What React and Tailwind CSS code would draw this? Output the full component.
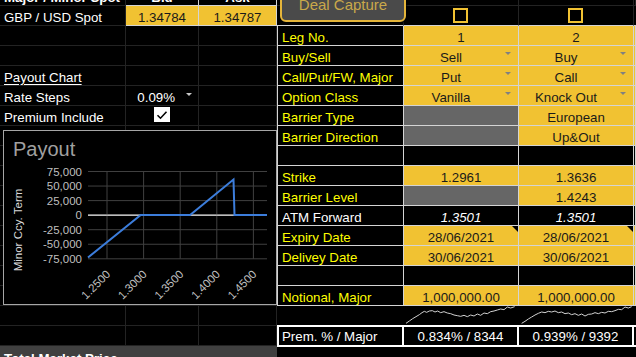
const Y = 'bg-[#f1c232] text-[#1a1a1a]';
const G = 'bg-[#666666]';
const B = 'bg-black text-white';

const Arrow = ({ color = '#808080', className = '' }) => (
  <svg width="6" height="3" viewBox="0 0 6 3" className={className}>
    <path d="M0 0h6L3 3z" fill={color} />
  </svg>
);

const Note = () => (
  <svg width="6" height="6" viewBox="0 0 6 6" className="absolute right-0 top-0">
    <path d="M0 0h6v6z" fill="#000" />
  </svg>
);

// left sheet: spot + payout settings
const Dark = 'border-r border-b border-[#232323]';
const Light = 'border-r border-b border-[#d4d4d4]';

const LeftRow = ({ a, b, c, cls = ['', '', ''] }) => (
  <div className="flex h-[20px]">
    <div className={`w-[126px] flex items-end pb-px pl-[4px] leading-none ${cls[0] || Dark}`}>{a}</div>
    <div className={`w-[73px] relative flex items-end justify-center pb-px leading-none ${cls[1] || Dark}`}>{b}</div>
    <div className={`w-[78px] flex items-end justify-center pb-px leading-none ${cls[2] || Dark}`}>{c}</div>
  </div>
);

const yTicks = ['75,000', '50,000', '25,000', '0', '-25,000', '-50,000', '-75,000'];
const xTicks = ['1.2500', '1.3000', '1.3500', '1.4000', '1.4500'];
const gy = (i) => 171.5 + i * 14.55;
const gx = (i) => 107 + i * 36.6;

const PayoutChart = () => (
  <div className="absolute left-[3px] top-[4px] w-[274px] h-[175px] border border-[#a6a6a6] bg-black">
    <svg width="272" height="173" viewBox="4 131 272 173">
      <text x="13" y="156" fontSize="20" fill="#a0a0a0">Payout</text>
      <text x="22" y="230" fontSize="11.5" fill="#d9d9d9" textAnchor="middle" transform="rotate(-90 22 230)">
        Minor Ccy. Term
      </text>
      {yTicks.map((t, i) => (
        <g key={t}>
          <line x1="88" x2="267" y1={gy(i)} y2={gy(i)} stroke={t === '0' ? '#d9d9d9' : '#404040'} strokeWidth="1" />
          <text x="82" y={gy(i) + 4} fontSize="11.5" fill="#bfbfbf" textAnchor="end">{t}</text>
        </g>
      ))}
      {xTicks.map((t, i) => (
        <g key={t}>
          <line x1={gx(i)} x2={gx(i)} y1={gy(0)} y2={gy(6)} stroke="#404040" strokeWidth="1" />
          <text
            x={gx(i) + 4}
            y="275"
            fontSize="11.5"
            fill="#bfbfbf"
            textAnchor="end"
            transform={`rotate(-45 ${gx(i) + 4} 275)`}
          >
            {t}
          </text>
        </g>
      ))}
      <line x1="88" x2="267" y1={gy(3)} y2={gy(3)} stroke="#d9d9d9" strokeWidth="1" />
      <polyline
        points="88,257.5 140.7,215 190.1,215 233.5,179.5 234.5,215 267,215"
        fill="none"
        stroke="#3c7ddb"
        strokeWidth="2"
      />
    </svg>
  </div>
);

const LeftPanel = () => (
  <div className="w-[277px] shrink-0">
    <LeftRow
      a={<span className="font-bold">Major / Minor Spot</span>}
      b={<span className="font-bold">Bid</span>}
      c={<span className="font-bold">Ask</span>}
      cls={['', Light, Light]}
    />
    <LeftRow
      a="GBP / USD Spot"
      b="1.34784"
      c="1.34787"
      cls={['', `${Y} ${Light}`, `${Y} ${Light}`]}
    />
    <LeftRow />
    <LeftRow />
    <LeftRow a={<span className="underline underline-offset-2">Payout Chart</span>} />
    <LeftRow
      a="Rate Steps"
      b={
        <>
          <span className="ml-auto mr-[23px]">0.09%</span>
          <Arrow color="#c8c8c8" className="absolute right-[6px] top-[7px]" />
        </>
      }
    />
    <LeftRow
      a="Premium Include"
      b={
        <span className="mb-[2px] w-[16px] h-[15px] bg-white flex items-center justify-center">
          <svg width="12" height="10" viewBox="0 0 12 10">
            <path d="M1.5 5.2 4.5 8.2 10.5 1.8" fill="none" stroke="#000" strokeWidth="1.6" />
          </svg>
        </span>
      }
    />
    <div className="relative">
      {Array.from({ length: 9 }).map((_, i) => (
        <LeftRow key={i} />
      ))}
      <PayoutChart />
    </div>
    <LeftRow />
    <LeftRow />
    <div className="h-[20px] bg-[#404040] flex items-end pb-px pl-[4px] leading-none font-bold">
      Total Market Price
    </div>
  </div>
);

// right sheet: leg table
const rows = [
  { label: 'Leg No.', cells: [{ t: '1' }, { t: '2' }] },
  { label: 'Buy/Sell', cells: [{ t: 'Sell', dd: true }, { t: 'Buy', dd: true }] },
  { label: 'Call/Put/FW, Major', cells: [{ t: 'Put', dd: true }, { t: 'Call', dd: true }] },
  { label: 'Option Class', cells: [{ t: 'Vanilla', dd: true }, { t: 'Knock Out', dd: true }] },
  { label: 'Barrier Type', cells: [{ bg: G }, { t: 'European' }] },
  { label: 'Barrier Direction', cells: [{ bg: G }, { t: 'Up&Out' }] },
  { blank: true },
  { label: 'Strike', cells: [{ t: '1.2961' }, { t: '1.3636' }] },
  { label: 'Barrier Level', cells: [{ bg: G }, { t: '1.4243' }] },
  {
    label: 'ATM Forward',
    white: true,
    l3: B,
    cells: [
      { t: '1.3501', bg: B, it: true },
      { t: '1.3501', bg: B, it: true },
    ],
  },
  { label: 'Expiry Date', cells: [{ t: '28/06/2021', note: true }, { t: '28/06/2021', note: true }] },
  { label: 'Delivey Date', cells: [{ t: '30/06/2021' }, { t: '30/06/2021' }] },
  { blank: true },
  { label: 'Notional, Major', cells: [{ t: '1,000,000.00' }, { t: '1,000,000.00' }] },
];

const spark1 =
  '408,250 418,243 428,236 438,230 448,224 456,218 463,214 470,217 478,213 487,212 495,216 503,213 512,218 522,215 532,219 542,221 552,225 562,227 572,229 582,226 592,230 602,225 612,228 622,222 632,226 642,219 652,221 662,215 672,213 682,210 692,207 702,209 712,201 722,204 734,200';
const spark2 =
  '755,250 765,244 775,237 785,231 795,225 805,220 815,216 825,218 835,214 845,216 855,213 865,218 875,216 885,221 895,219 905,224 915,221 925,226 935,222 945,228 955,223 965,222 975,218 985,221 995,217 1005,219 1015,214 1025,215 1035,212 1045,208 1055,209 1065,201 1075,204 1085,200';

const Spark = ({ box, pts }) => (
  <svg width="115" height="19" viewBox={box} preserveAspectRatio="none">
    <polyline points={pts} fill="none" stroke="#d0d0d0" strokeWidth="1" vectorEffect="non-scaling-stroke" />
  </svg>
);

const LegCell = ({ c, w }) => (
  <div
    className={`${w} relative flex items-end justify-center pb-px leading-none ${Light} ${c.bg || Y} ${
      c.dd ? 'pr-[20px]' : ''
    } ${c.it ? 'italic' : ''}`}
  >
    {c.t}
    {c.dd && <Arrow className="absolute right-[7px] top-[6px]" />}
    {c.note && <Note />}
  </div>
);

const RightPanel = () => (
  <div className="relative flex-1">
    {/* top strip with deal button and leg checkboxes */}
    <div className="flex h-[20px]">
      <div className={`w-[127px] ${Dark}`} />
      <div className={`w-[115px] ${Dark}`} />
      <div className={`w-[115px] ${Dark}`} />
      <div className={`flex-1 ${Dark}`} />
    </div>
    <div className="flex h-[20px]">
      <div className="w-[127px] border-r border-b border-r-[#232323] border-b-[#d4d4d4]" />
      {[0, 1].map((i) => (
        <div key={i} className="w-[115px] flex items-center justify-center border-r border-b border-r-[#232323] border-b-[#d4d4d4]">
          <span className="w-[15px] h-[15px] border-2 border-[#f1c232] bg-black -ml-px" />
        </div>
      ))}
      <div className="flex-1 border-b border-[#d4d4d4]" />
    </div>

    {rows.map((r, i) =>
      r.blank ? (
        <div key={i} className="flex h-[20px]">
          <div className={`w-[127px] border-l ${Light}`} />
          <div className={`w-[115px] ${Light}`} />
          <div className={`w-[115px] ${Light}`} />
          <div className={`flex-1 ${Light}`} />
        </div>
      ) : (
        <div key={i} className="flex h-[20px]">
          <div
            className={`w-[127px] border-l ${Light} flex items-end pb-px pl-[4px] leading-none ${
              r.white ? 'text-white' : 'text-[#ffff00]'
            }`}
          >
            {r.label}
          </div>
          <LegCell c={r.cells[0]} w="w-[115px]" />
          <LegCell c={r.cells[1]} w="w-[115px]" />
          <div className={`flex-1 ${Light} ${r.l3 || Y}`} />
        </div>
      )
    )}

    <div className="flex h-[19px]">
      <div className="w-[127px]" />
      <div className="w-[115px]">
        <Spark box="402 198 345 57" pts={spark1} />
      </div>
      <div className="w-[115px]">
        <Spark box="747 198 345 57" pts={spark2} />
      </div>
    </div>
    <div className="flex h-[22px] border-y-2 border-white text-white">
      <div className="w-[127px] border-x-2 border-white flex items-end pb-[2px] pl-[3px] leading-none">
        Prem. % / Major
      </div>
      <div className="w-[115px] border-r-2 border-white flex items-end justify-center pb-[2px] leading-none">
        0.834% / 8344
      </div>
      <div className="w-[115px] border-r-2 border-white flex items-end justify-center pb-[2px] leading-none">
        0.939% / 9392
      </div>
      <div className="flex-1" />
    </div>

    <button className="absolute left-[3px] top-0 w-[126px] h-[36px] rounded-[6px] border-2 border-[#e5b53a] bg-[#4a4a4a] text-[#c9a84a] text-[15px] pt-[3px] shadow-[1px_1px_2px_rgba(0,0,0,0.8)]">
      Deal Capture
    </button>
  </div>
);

export default function App() {
  return (
    <div className="w-[636px] h-[357px] overflow-hidden bg-black text-white text-[13.3px] font-['Liberation_Sans',Arial,sans-serif]">
      <div className="flex -mt-[14px]">
        <LeftPanel />
        <RightPanel />
      </div>
    </div>
  );
}
